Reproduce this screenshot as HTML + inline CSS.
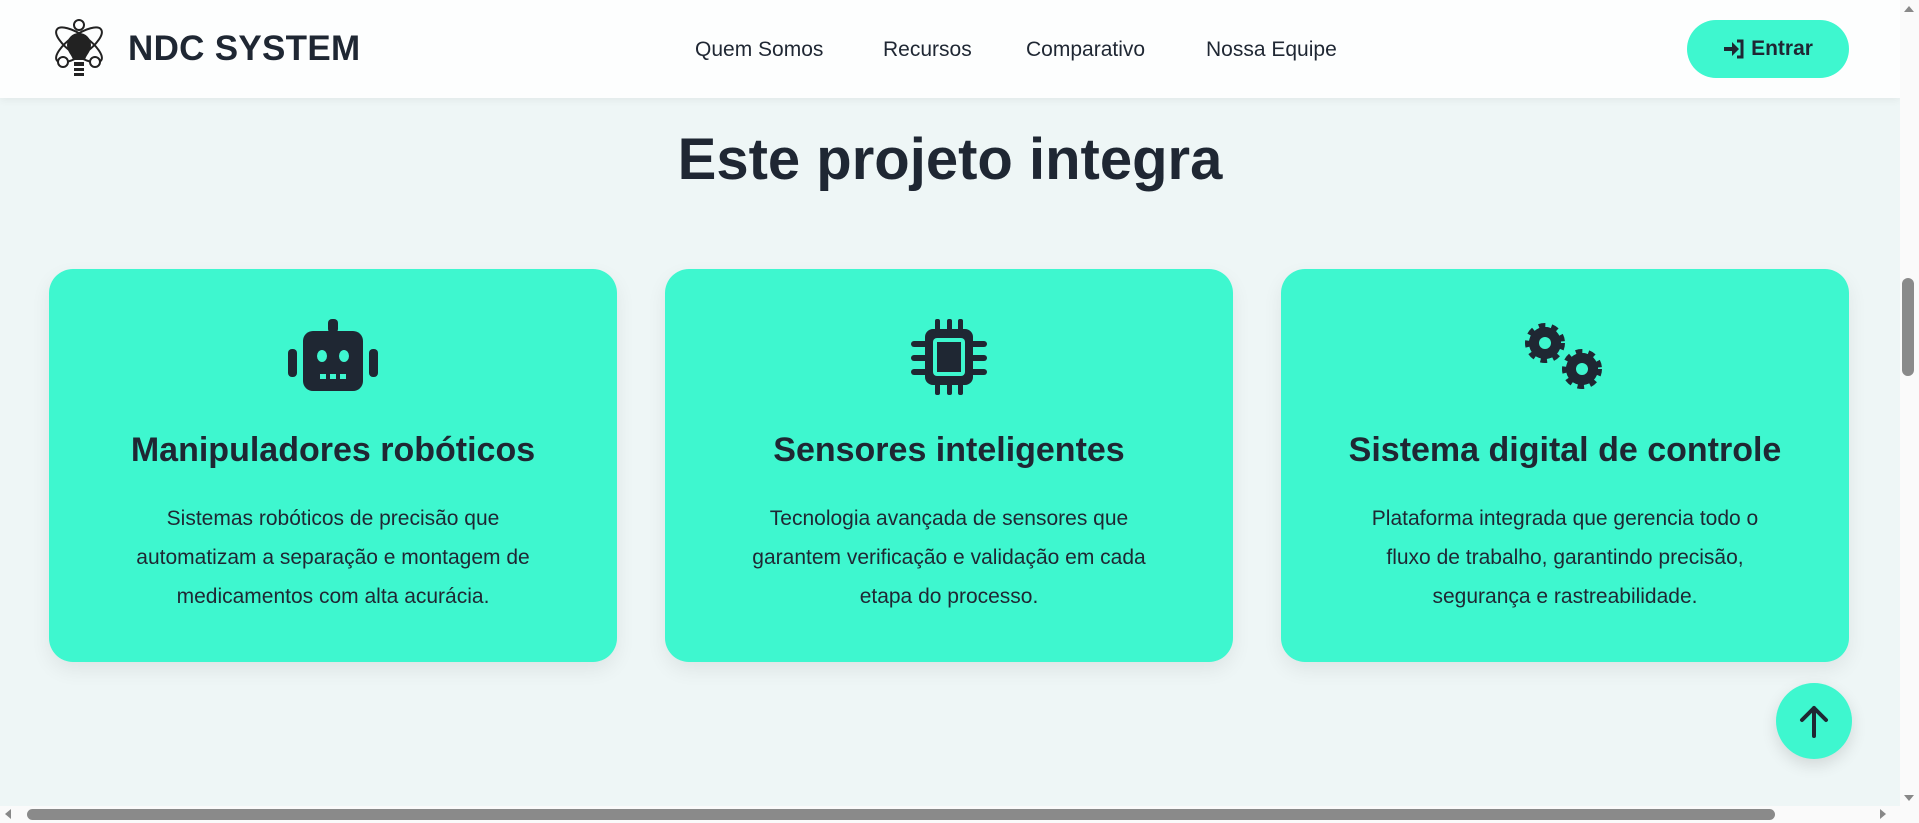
<!DOCTYPE html>
<html><head><meta charset="utf-8"><style>
*{margin:0;padding:0;box-sizing:border-box}
html,body{width:1919px;height:823px;overflow:hidden;background:#eef6f6;font-family:"Liberation Sans",sans-serif;color:#1f2733}
nav{position:absolute;left:0;top:0;width:1900px;height:98px;background:#fdfefe;box-shadow:0 2px 8px rgba(0,0,0,.06)}
.brand{position:absolute;left:128px;top:29px;font-size:35px;font-weight:700;letter-spacing:.3px}
.links a{position:absolute;top:38px;font-size:21px;color:#1f2733;text-decoration:none}
.btn{position:absolute;left:1687px;top:20px;width:162px;height:58px;border-radius:29px;background:#3ef7cf;font-weight:700;font-size:21px;display:flex;align-items:center;justify-content:center;gap:6px}
h1{position:absolute;left:0;width:1900px;top:126px;text-align:center;font-size:58px;font-weight:700}
.card{position:absolute;top:269px;width:568px;height:393px;background:#3ef7cf;border-radius:24px;box-shadow:0 8px 20px rgba(0,0,0,.07);text-align:center}
.card svg{position:absolute;left:50%;top:50px;transform:translateX(-50%)}
.card h3{position:absolute;top:162px;width:100%;font-size:34px;font-weight:700}
.card p{position:absolute;top:230px;left:0;right:0;font-size:21px;line-height:39px;white-space:nowrap}
.top{position:absolute;left:1776px;top:683px;width:76px;height:76px;border-radius:50%;background:#3ef7cf;box-shadow:0 6px 16px rgba(0,0,0,.12);display:flex;align-items:center;justify-content:center}
.vs{position:absolute;left:1900px;top:0;width:19px;height:806px;background:#fafafa}
.hs{position:absolute;left:0;top:806px;width:1919px;height:17px;background:#fafafa}
</style></head><body>
<nav>
<svg style="position:absolute;left:49px;top:17px" width="60" height="64" viewBox="0 0 60 64"><g fill="none" stroke="#222" stroke-width="2"><ellipse cx="30" cy="28" rx="27" ry="10" transform="rotate(35 30 28)"/><ellipse cx="30" cy="28" rx="27" ry="10" transform="rotate(-35 30 28)"/><circle cx="30" cy="8" r="5" fill="#fff"/><circle cx="14" cy="45" r="5" fill="#fff"/><circle cx="46" cy="45" r="5" fill="#fff"/></g><path d="M18 28a12 12 0 1 1 24 0c0 7-5 10-6 15h-12c-1-5-6-8-6-15z" fill="#222"/><rect x="25" y="45" width="10" height="4" fill="#222"/><rect x="25" y="51" width="10" height="3" fill="#222"/><rect x="25" y="56" width="10" height="3" fill="#222"/></svg>
<div class="brand">NDC SYSTEM</div>
<div class="links"><a style="left:695px">Quem Somos</a><a style="left:883px">Recursos</a><a style="left:1026px">Comparativo</a><a style="left:1206px">Nossa Equipe</a></div>
<div class="btn"><svg width="22" height="20" viewBox="0 0 22 20"><path d="M1 8h8V3l7 7-7 7v-5H1z" fill="#1f2733"/><path d="M14 2h5v16h-5" fill="none" stroke="#1f2733" stroke-width="3"/></svg>Entrar</div>
</nav>
<h1>Este projeto integra</h1>
<div class="card" style="left:49px"><svg width="92" height="72" viewBox="0 0 92 72"><rect x="41" y="0" width="10" height="14" rx="4" fill="#1f2733"/><rect x="16" y="12" width="60" height="60" rx="10" fill="#1f2733"/><rect x="1" y="30" width="9" height="28" rx="4" fill="#1f2733"/><rect x="82" y="30" width="9" height="28" rx="4" fill="#1f2733"/><ellipse cx="35" cy="37" rx="5" ry="6" fill="#3ef7cf"/><ellipse cx="57" cy="37" rx="5" ry="6" fill="#3ef7cf"/><rect x="33" y="55" width="6" height="5" fill="#3ef7cf"/><rect x="43" y="55" width="6" height="5" fill="#3ef7cf"/><rect x="53" y="55" width="6" height="5" fill="#3ef7cf"/></svg><h3>Manipuladores robóticos</h3><p>Sistemas robóticos de precisão que<br>automatizam a separação e montagem de<br>medicamentos com alta acurácia.</p></div>
<div class="card" style="left:665px"><svg width="76" height="76" viewBox="0 0 76 76"><g fill="#1f2733"><rect x="14" y="10" width="48" height="56" rx="8"/><rect x="24" y="0" width="5" height="14" rx="2"/><rect x="36" y="0" width="5" height="14" rx="2"/><rect x="47" y="0" width="5" height="14" rx="2"/><rect x="24" y="62" width="5" height="14" rx="2"/><rect x="36" y="62" width="5" height="14" rx="2"/><rect x="47" y="62" width="5" height="14" rx="2"/><rect x="0" y="22" width="18" height="6" rx="3"/><rect x="0" y="36" width="18" height="6" rx="3"/><rect x="0" y="50" width="18" height="6" rx="3"/><rect x="58" y="22" width="18" height="6" rx="3"/><rect x="58" y="36" width="18" height="6" rx="3"/><rect x="58" y="50" width="18" height="6" rx="3"/></g><rect x="22" y="19" width="32" height="38" rx="4" fill="#3ef7cf"/><rect x="26" y="23" width="24" height="30" fill="#1f2733"/></svg><h3>Sensores inteligentes</h3><p>Tecnologia avançada de sensores que<br>garantem verificação e validação em cada<br>etapa do processo.</p></div>
<div class="card" style="left:1281px"><svg width="92" height="76" viewBox="0 0 92 76"><g fill="#1f2733" stroke="#1f2733" stroke-width="8" stroke-dasharray="6 5.6"><circle cx="26" cy="24" r="16"/><circle cx="63" cy="50" r="16"/></g><circle cx="26" cy="24" r="16" fill="#1f2733"/><circle cx="63" cy="50" r="16" fill="#1f2733"/><circle cx="26" cy="24" r="6" fill="#3ef7cf"/><circle cx="63" cy="50" r="6" fill="#3ef7cf"/></svg><h3>Sistema digital de controle</h3><p>Plataforma integrada que gerencia todo o<br>fluxo de trabalho, garantindo precisão,<br>segurança e rastreabilidade.</p></div>
<div class="top"><svg width="32" height="34" viewBox="0 0 32 34"><path d="M16 32V4M4 16L16 4l12 12" fill="none" stroke="#1f2733" stroke-width="4" stroke-linecap="round" stroke-linejoin="round"/></svg></div>
<div class="vs"><div style="position:absolute;left:2px;top:278px;width:12px;height:98px;border-radius:6px;background:#8a8a8a"></div><div style="position:absolute;left:4px;top:6px;border:5px solid transparent;border-bottom:6px solid #888;border-top:0"></div><div style="position:absolute;left:4px;top:795px;border:5px solid transparent;border-top:6px solid #888;border-bottom:0"></div></div>
<div class="hs"><div style="position:absolute;left:27px;top:3px;width:1748px;height:11px;border-radius:6px;background:#8a8a8a"></div><div style="position:absolute;left:5px;top:3px;border:5px solid transparent;border-right:6px solid #888;border-left:0"></div><div style="position:absolute;left:1880px;top:3px;border:5px solid transparent;border-left:6px solid #888;border-right:0"></div></div>
</body></html>
